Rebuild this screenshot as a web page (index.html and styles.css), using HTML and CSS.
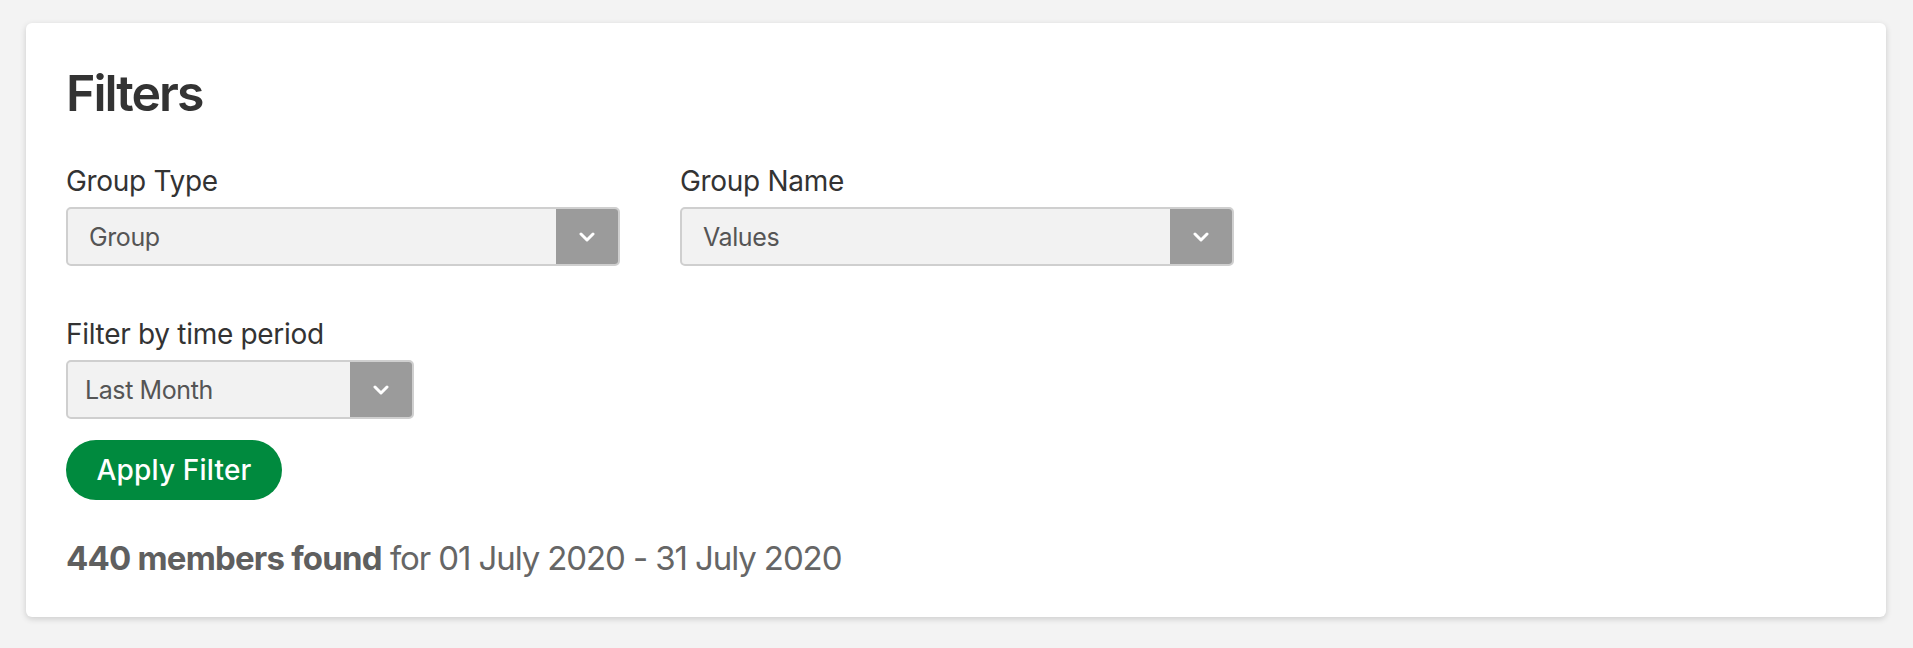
FILE: index.html
```html
<!DOCTYPE html>
<html lang="en">
<head>
<meta charset="utf-8">
<title>Filters</title>
<link rel="stylesheet" href="styles.css">
</head>
<body>
<div class="page">
  <section class="card">
    <h1 class="title">Filters</h1>
    <div class="row">
      <div class="field field-wide">
        <label class="label">Group Type</label>
        <div class="select">
          <span class="value">Group</span>
          <span class="arrow"><svg width="16" height="10" viewBox="0 0 16 10"><path d="M2 2 L8 8 L14 2" fill="none" stroke="#fff" stroke-width="3" stroke-linecap="round" stroke-linejoin="round"/></svg></span>
        </div>
      </div>
      <div class="field field-wide">
        <label class="label">Group Name</label>
        <div class="select">
          <span class="value">Values</span>
          <span class="arrow"><svg width="16" height="10" viewBox="0 0 16 10"><path d="M2 2 L8 8 L14 2" fill="none" stroke="#fff" stroke-width="3" stroke-linecap="round" stroke-linejoin="round"/></svg></span>
        </div>
      </div>
    </div>
    <div class="field field-small">
      <label class="label">Filter by time period</label>
      <div class="select">
        <span class="value value-small">Last Month</span>
        <span class="arrow"><svg width="16" height="10" viewBox="0 0 16 10"><path d="M2 2 L8 8 L14 2" fill="none" stroke="#fff" stroke-width="3" stroke-linecap="round" stroke-linejoin="round"/></svg></span>
      </div>
    </div>
    <button class="apply">Apply Filter</button>
    <p class="result"><strong>440 members found</strong> for 01 July 2020 - 31 July 2020</p>
  </section>
</div>
</body>
</html>
```

FILE: styles.css
```css
html, body {
  margin: 0;
  padding: 0;
  background: #f3f3f3;
  font-family: Inter, "Noto Sans", "Liberation Sans", sans-serif;
  color: #333;
}
.page {
  padding: 23px 27px 30px 26px;
}
.card {
  background: #fff;
  border-radius: 6px;
  box-shadow: 0 2px 6px rgba(0, 0, 0, 0.16);
  padding: 40px 40px 38px 40px;
}
.title {
  margin: 0 0 42px 0;
  font-size: 50px;
  line-height: 60px;
  font-weight: 600;
  letter-spacing: -2px;
  color: #333;
}
.row {
  display: flex;
  gap: 60px;
  margin-bottom: 52px;
}
.field {
  display: flex;
  flex-direction: column;
}
.field-wide {
  width: 554px;
}
.field-small {
  width: 348px;
}
.label {
  font-size: 28px;
  line-height: 33.6px;
  letter-spacing: -0.3px;
  margin-bottom: 8.5px;
  color: #333;
}
.select {
  display: flex;
  height: 59px;
  box-sizing: border-box;
  border: 2px solid #cfcfcf;
  border-radius: 5px;
  background: #f2f2f2;
}
.value {
  flex: 1;
  display: flex;
  align-items: center;
  padding-left: 21px;
  font-size: 25px;
  letter-spacing: -0.4px;
  color: #555;
}
.value-small {
  padding-left: 17px;
}
.arrow {
  width: 62px;
  background: #9b9b9b;
  border-radius: 0 3px 3px 0;
  display: flex;
  align-items: center;
  justify-content: center;
}
.apply {
  display: block;
  margin-top: 21px;
  width: 216px;
  height: 60px;
  border: none;
  border-radius: 30px;
  background: #008a3e;
  color: #fff;
  font-family: Inter, "Noto Sans", "Liberation Sans", sans-serif;
  font-size: 28px;
  font-weight: 500;
  letter-spacing: 0.2px;
  padding: 0;
}
.result {
  margin: 39px 0 0 0;
  font-size: 33px;
  line-height: 39.6px;
  letter-spacing: -1.1px;
  color: #666;
}
.result strong {
  font-weight: 700;
  color: #5f5f5f;
  letter-spacing: -0.8px;
}
```
